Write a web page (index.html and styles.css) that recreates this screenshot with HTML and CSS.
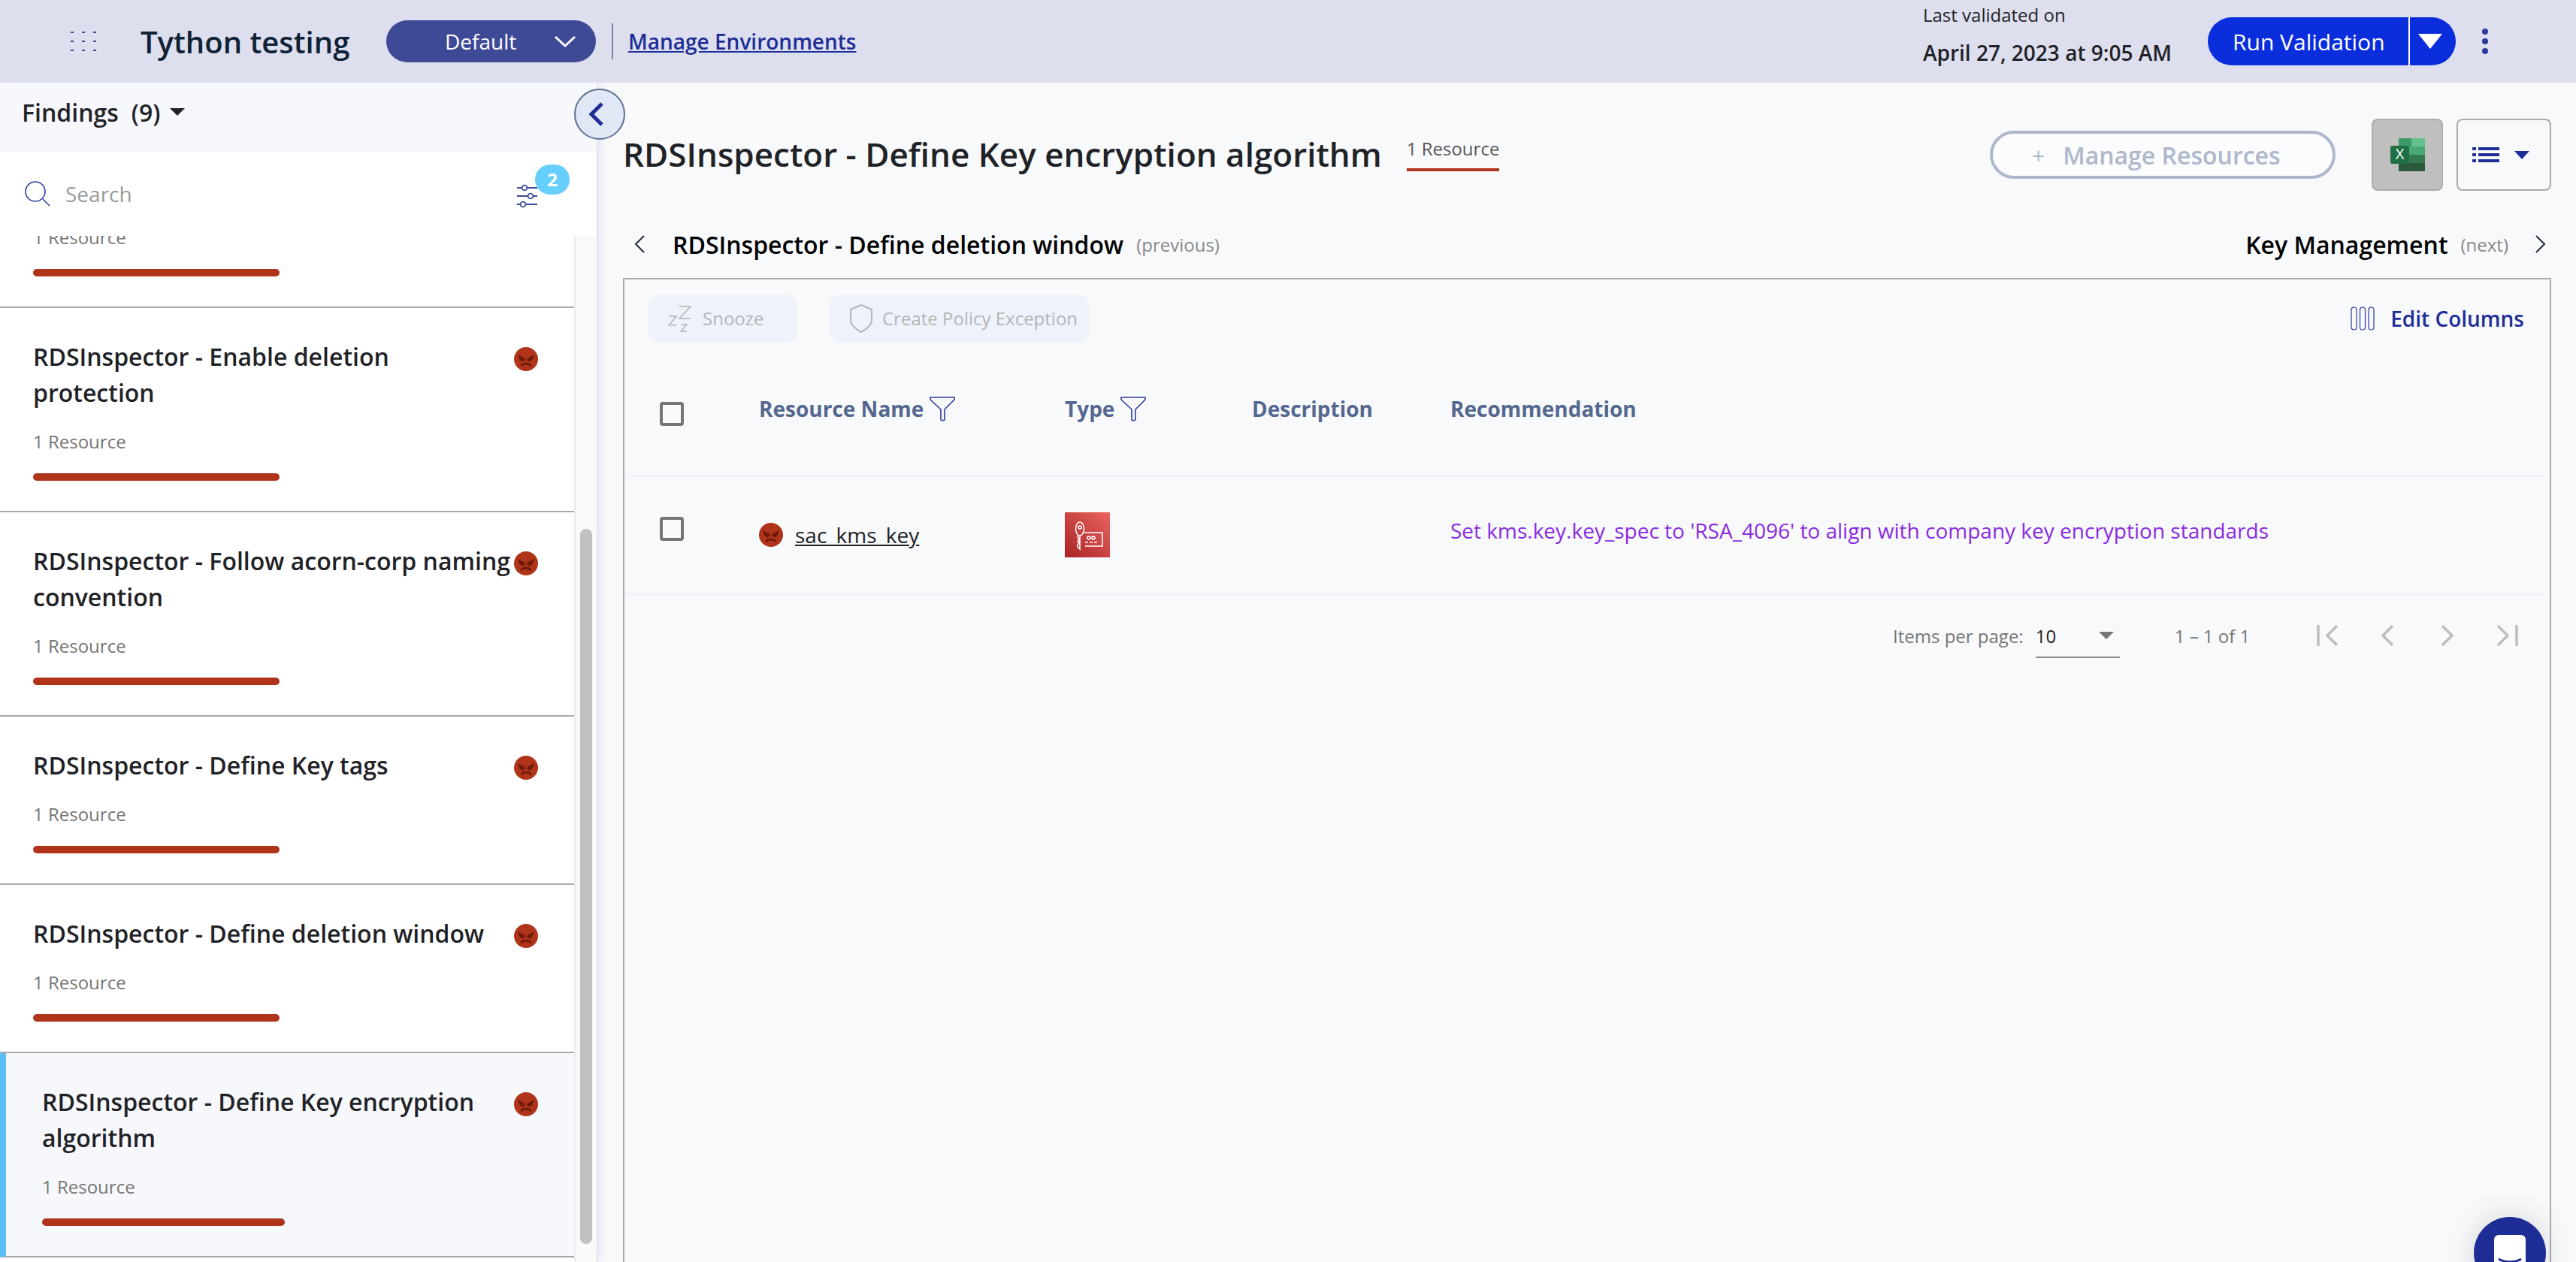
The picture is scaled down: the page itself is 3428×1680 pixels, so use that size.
FILE: index.html
```html
<!DOCTYPE html>
<html lang="en">
<head>
<meta charset="utf-8">
<title>Tython testing - Findings</title>
<link rel="stylesheet" href="styles.css">
</head>
<body>
<svg class="defs" width="0" height="0">
  <symbol id="angry" viewBox="0 0 32 32">
    <circle cx="16" cy="16" r="16" fill="#b03419"/>
    <path d="M5 10l9.500 5v3l-3.500 1.500-3.500-2.500zM27 10l-9.500 5v3l3.500 1.500 3.500-2.500z" fill="#6e1a0a"/>
    <path d="M9.500 25.500c2-4.500 11-4.500 13 0" fill="none" stroke="#6e1a0a" stroke-width="2.600"/>
  </symbol>
  <symbol id="funnel" viewBox="0 0 34 33">
    <path d="M1 1h32v3L20 17v14l-3 1-2-1V17L1 4z" fill="none" stroke="#2a3a9e" stroke-width="1.6"/>
  </symbol>
</svg>

<header class="topbar">
  <svg class="apps" width="34" height="26" viewBox="0 0 34 26" fill="#3f4a97">
    <rect x="0" y="0" width="4" height="2"/><rect x="15" y="0" width="4" height="2"/><rect x="30" y="0" width="4" height="2"/>
    <rect x="0" y="12" width="4" height="2"/><rect x="15" y="12" width="4" height="2"/><rect x="30" y="12" width="4" height="2"/>
    <rect x="0" y="24" width="4" height="2"/><rect x="15" y="24" width="4" height="2"/><rect x="30" y="24" width="4" height="2"/>
  </svg>
  <div class="app-name">Tython testing</div>
  <div class="env-select">
    <span>Default</span>
    <svg width="30" height="18" viewBox="0 0 30 18"><path d="M2 3l13 12L28 3" fill="none" stroke="#fff" stroke-width="3"/></svg>
  </div>
  <div class="env-divider"></div>
  <a class="env-link" href="#">Manage Environments</a>
  <div class="validated">
    <div class="validated-label">Last validated on</div>
    <div class="validated-date">April 27, 2023 at 9:05 AM</div>
  </div>
  <div class="run-btn">
    <span class="run-label">Run Validation</span>
    <span class="run-arrow"><svg width="32" height="20" viewBox="0 0 32 20"><path d="M0 0h32L16 20z" fill="#fff"/></svg></span>
  </div>
  <div class="kebab"><i></i><i></i><i></i></div>
</header>

<div class="layout">
  <aside class="sidebar">
    <div class="side-head">
      <span class="side-title">Findings</span>
      <span class="side-count">(9)</span>
      <span class="side-caret"></span>
    </div>
    <div class="side-search">
      <svg width="34" height="34" viewBox="0 0 34 34" fill="none" stroke="#2e3d9c" stroke-width="1.6"><circle cx="14" cy="14" r="13"/><path d="M24 24l9 9"/></svg>
      <span class="search-text">Search</span>
      <span class="filter">
        <svg width="28" height="32" viewBox="0 0 28 32" fill="#fff" stroke="#3f4a97" stroke-width="1.8"><path d="M0 5h27M0 16h27M0 27h27" /><circle cx="10" cy="5" r="3.4"/><circle cx="18" cy="16" r="3.4"/><circle cx="8" cy="27" r="3.4"/></svg>
        <span class="badge">2</span>
      </span>
    </div>
    <div class="side-body">
      <div class="findings">
        <div class="finding finding-cut">
          <div class="finding-res">1 Resource</div>
          <div class="finding-bar"></div>
        </div>
        <div class="finding">
          <div class="finding-top">
            <div class="finding-name">RDSInspector - Enable deletion protection</div>
            <svg class="finding-icon"><use href="#angry"/></svg>
          </div>
          <div class="finding-res">1 Resource</div>
          <div class="finding-bar"></div>
        </div>
        <div class="finding">
          <div class="finding-top">
            <div class="finding-name">RDSInspector - Follow acorn-corp naming convention</div>
            <svg class="finding-icon"><use href="#angry"/></svg>
          </div>
          <div class="finding-res">1 Resource</div>
          <div class="finding-bar"></div>
        </div>
        <div class="finding">
          <div class="finding-top">
            <div class="finding-name">RDSInspector - Define Key tags</div>
            <svg class="finding-icon"><use href="#angry"/></svg>
          </div>
          <div class="finding-res">1 Resource</div>
          <div class="finding-bar"></div>
        </div>
        <div class="finding">
          <div class="finding-top">
            <div class="finding-name">RDSInspector - Define deletion window</div>
            <svg class="finding-icon"><use href="#angry"/></svg>
          </div>
          <div class="finding-res">1 Resource</div>
          <div class="finding-bar"></div>
        </div>
        <div class="finding finding-active">
          <div class="finding-top">
            <div class="finding-name">RDSInspector - Define Key encryption algorithm</div>
            <svg class="finding-icon"><use href="#angry"/></svg>
          </div>
          <div class="finding-res">1 Resource</div>
          <div class="finding-bar"></div>
        </div>
      </div>
      <div class="scroll-track"><div class="scroll-thumb"></div></div>
    </div>
    <div class="collapse">
      <svg width="30" height="34" viewBox="0 0 30 34"><path d="M21 3L7 17l14 14" fill="none" stroke="#1e2d96" stroke-width="5"/></svg>
    </div>
  </aside>

  <main class="main">
    <div class="title-row">
      <h1 class="page-title">RDSInspector - Define Key encryption algorithm</h1>
      <div class="res-tab">1 Resource</div>
      <div class="manage-btn"><span class="manage-plus">+</span>Manage Resources</div>
      <div class="excel-btn">
        <svg width="46" height="44" viewBox="0 0 46 44">
          <rect x="11" y="0" width="35" height="44" rx="2" fill="#21734a"/>
          <rect x="28" y="0" width="18" height="11" fill="#66c08a"/>
          <rect x="11" y="0" width="17" height="11" fill="#3b9a66"/>
          <rect x="11" y="11" width="35" height="11" fill="#4aa876"/>
          <rect x="11" y="22" width="35" height="11" fill="#33794c"/>
          <rect x="11" y="33" width="35" height="11" fill="#2a5a3a"/>
          <rect x="0" y="10" width="25" height="24" rx="2" fill="#1f7145"/>
          <text x="12.5" y="28" class="excel-x">X</text>
        </svg>
      </div>
      <div class="view-btn">
        <svg width="36" height="20" viewBox="0 0 36 20" fill="#1e2d96"><rect x="0" y="0" width="5" height="4"/><rect x="8" y="0" width="28" height="4"/><rect x="0" y="8" width="5" height="4"/><rect x="8" y="8" width="28" height="4"/><rect x="0" y="16" width="5" height="4"/><rect x="8" y="16" width="28" height="4"/></svg>
        <span class="view-caret"></span>
      </div>
    </div>

    <div class="nav-row">
      <svg class="nav-chev" width="14" height="24" viewBox="0 0 14 24"><path d="M13 1L2 12l11 11" fill="none" stroke="#1f2a3a" stroke-width="2"/></svg>
      <span class="nav-name">RDSInspector - Define deletion window</span>
      <span class="nav-hint">(previous)</span>
      <span class="nav-name nav-next">Key Management</span>
      <span class="nav-hint">(next)</span>
      <svg class="nav-chev nav-chev-r" width="14" height="24" viewBox="0 0 14 24"><path d="M1 1l11 11L1 23" fill="none" stroke="#1f2a3a" stroke-width="2"/></svg>
    </div>

    <section class="panel">
      <div class="toolbar">
        <div class="tool-btn tool-snooze">
          <svg width="34" height="36" viewBox="0 0 34 36" fill="none" stroke="#b5b5b5" stroke-width="1.6"><path d="M1 15h10L1 27h10M15 2h15L15 18h15M17 26h8l-8 9h8"/></svg>
          <span>Snooze</span>
        </div>
        <div class="tool-btn tool-policy">
          <svg width="32" height="38" viewBox="0 0 32 38" fill="none" stroke="#b5b5b5" stroke-width="2"><path d="M16 1l14 6v14c0 7-8 13-14 16C10 34 2 28 2 21V7z"/></svg>
          <span>Create Policy Exception</span>
        </div>
        <div class="edit-cols">
          <svg width="32" height="32" viewBox="0 0 32 32" fill="none" stroke="#2a3a9e" stroke-width="1.2"><rect x="1" y="1" width="7" height="30" rx="3.5"/><rect x="12.5" y="1" width="7" height="30" rx="3.5"/><rect x="24" y="1" width="7" height="30" rx="3.5"/></svg>
          <span>Edit Columns</span>
        </div>
      </div>

      <div class="grid-row grid-head">
        <div><span class="check check-head"></span></div>
        <div class="col-title">Resource Name <svg class="funnel"><use href="#funnel"/></svg></div>
        <div class="col-title">Type <svg class="funnel"><use href="#funnel"/></svg></div>
        <div class="col-title">Description</div>
        <div class="col-title">Recommendation</div>
      </div>

      <div class="grid-row grid-data">
        <div><span class="check check-data"></span></div>
        <div class="res-cell">
          <svg class="res-icon"><use href="#angry"/></svg>
          <a class="res-link" href="#">sac_kms_key</a>
        </div>
        <div>
          <svg class="type-icon" width="60" height="60" viewBox="0 0 60 60">
            <defs>
              <linearGradient id="kmsbg" x1="0" y1="1" x2="1" y2="0">
                <stop offset="0" stop-color="#a92325"/>
                <stop offset="1" stop-color="#ea6460"/>
              </linearGradient>
            </defs>
            <rect width="60" height="60" fill="url(#kmsbg)"/>
            <g fill="none" stroke="#fff" stroke-width="1.6">
              <ellipse cx="20" cy="22" rx="5.5" ry="9"/>
              <circle cx="20" cy="20" r="2"/>
              <path d="M20 31v18l-3 -3v-3l2-2-2-2 2-3-2-3v-2"/>
              <path d="M26 27h24v18H27"/>
              <circle cx="32" cy="34" r="2"/>
              <circle cx="38" cy="34" r="2"/>
              <path d="M27 40h4M33 40h4M39 40h4"/>
            </g>
          </svg>
        </div>
        <div></div>
        <div class="rec-cell">Set kms.key.key_spec to 'RSA_4096' to align with company key encryption standards</div>
      </div>

      <div class="pager">
        <span class="pager-label">Items per page:</span>
        <div class="pager-select"><span>10</span><i></i></div>
        <span class="pager-range">1 – 1 of 1</span>
        <div class="pager-btns">
          <svg width="29" height="28" viewBox="0 0 29 28" fill="none" stroke="#bdbdbd" stroke-width="3.4"><path d="M2 0v28M27 1L14 14l13 13"/></svg>
          <svg width="18" height="28" viewBox="0 0 18 28" fill="none" stroke="#bdbdbd" stroke-width="3.4"><path d="M16 1L3 14l13 13"/></svg>
          <svg class="pager-next" width="18" height="28" viewBox="0 0 18 28" fill="none" stroke="#bdbdbd" stroke-width="3.4"><path d="M2 1l13 13L2 27"/></svg>
          <svg width="29" height="28" viewBox="0 0 29 28" fill="none" stroke="#bdbdbd" stroke-width="3.4"><path d="M27 0v28M2 1l13 13L2 27"/></svg>
        </div>
      </div>
    </section>
  </main>
</div>

<div class="chat">
  <svg width="42" height="60" viewBox="0 0 42 60"><rect width="42" height="44" rx="6" fill="#fff"/><path d="M6 32c8 5 22 5 30 0" fill="none" stroke="#1e2d96" stroke-width="3"/></svg>
</div>
</body>
</html>
```

FILE: styles.css
```css
html, body {
  height: 100%;
  margin: 0;
  padding: 0;
  overflow: hidden;
}

body {
  background-color: #f8f9fb;
  color: #1f2226;
  font-family: "Open Sans", "Noto Sans", sans-serif;
  position: relative;
}

.defs {
  position: absolute;
}

/* top bar */
.topbar {
  height: 110px;
  background-color: #dddfee;
  display: flex;
  align-items: center;
  padding-left: 94px;
  padding-right: 117px;
  box-sizing: border-box;
}

.app-name {
  margin-left: 59px;
  font-size: 40px;
  font-weight: 600;
  color: #0f2236;
  width: 327px;
  white-space: nowrap;
}

.env-select {
  width: 279px;
  height: 56px;
  border-radius: 28px;
  background-color: #3f4a97;
  color: #fff;
  font-size: 28px;
  display: flex;
  align-items: center;
  box-sizing: border-box;
  padding-left: 78px;
}

.env-select svg {
  margin-left: 50px;
}

.env-divider {
  width: 2px;
  height: 48px;
  background-color: #7b83ad;
  margin-left: 21px;
}

.env-link {
  margin-left: 20px;
  font-size: 28px;
  font-weight: 600;
  color: #1e2d96;
}

.validated {
  margin-left: auto;
  width: 379px;
  height: 110px;
  position: relative;
  display: flex;
  flex-direction: column;
}

.validated-label {
  font-size: 24px;
  line-height: 40px;
  color: #1f2226;
}

.validated-date {
  font-size: 28px;
  font-weight: 600;
  line-height: 40px;
  margin-top: 10px;
  color: #1f2226;
  white-space: nowrap;
}

.run-btn {
  width: 330px;
  height: 64px;
  border-radius: 32px;
  background-color: #0b2edc;
  color: #fff;
  display: flex;
  align-items: center;
  box-sizing: border-box;
}

.run-label {
  width: 267px;
  padding-left: 33px;
  box-sizing: border-box;
  font-size: 30px;
  font-weight: 500;
  white-space: nowrap;
}

.run-arrow {
  border-left: 2px solid #fff;
  height: 64px;
  padding-left: 11px;
  display: flex;
  align-items: center;
}

.kebab {
  margin-left: 35px;
  display: flex;
  flex-direction: column;
  gap: 5px;
}

.kebab i {
  display: block;
  width: 8px;
  height: 8px;
  border-radius: 50%;
  background-color: #2a3a9e;
}

.layout {
  display: flex;
  height: 1570px;
}

/* left column */
.sidebar {
  width: 796px;
  flex: none;
  box-sizing: border-box;
  border-right: 2px solid #e2e3e8;
  box-shadow: 8px 0 8px -4px rgba(225, 229, 242, 0.8);
  position: relative;
  display: flex;
  flex-direction: column;
}

.side-head {
  height: 92px;
  background-color: #f7f8fb;
  display: flex;
  align-items: center;
  padding-left: 29px;
  font-size: 32px;
  font-weight: 600;
  flex: none;
  padding-bottom: 14px;
  box-sizing: border-box;
}

.side-count {
  margin-left: 17px;
}

.side-caret {
  margin-left: 13px;
  border-left: 10px solid transparent;
  border-right: 10px solid transparent;
  border-top: 10px solid #1f2226;
}

.side-search {
  height: 112px;
  background-color: #fff;
  display: flex;
  align-items: center;
  padding-left: 33px;
  flex: none;
}

.search-text {
  margin-left: 20px;
  font-size: 28px;
  color: #9b9b9b;
}

.filter {
  margin-left: auto;
  margin-right: 78px;
  position: relative;
  display: flex;
  margin-top: 6px;
}

.badge {
  position: absolute;
  left: 24px;
  top: -26px;
  width: 46px;
  height: 40px;
  border-radius: 20px;
  background-color: #66cffd;
  color: #fff;
  font-size: 24px;
  font-weight: 700;
  text-align: center;
  line-height: 40px;
}

.side-body {
  flex: 1;
  display: flex;
  min-height: 0;
}

.findings {
  width: 764px;
  flex: none;
  background-color: #fff;
}

.finding {
  box-sizing: border-box;
  border-bottom: 2px solid #aaaaaa;
  padding: 41px 48px 40px 44px;
}

.finding-cut {
  height: 96px;
  padding-top: 0;
  display: flex;
  flex-direction: column;
  justify-content: flex-end;
  overflow: hidden;
}

.finding-active {
  background-color: #f7f8fb;
  border-left: 8px solid #5bbcf8;
  padding-left: 48px;
}

.finding-top {
  display: flex;
  justify-content: space-between;
}

.finding-name {
  font-size: 32px;
  font-weight: 600;
  line-height: 48px;
  width: 640px;
  color: #1f2226;
}

.finding-active .finding-name {
  width: 620px;
}

.finding-icon {
  width: 32px;
  height: 32px;
  margin-top: 11px;
  flex: none;
}

.finding-res {
  font-size: 24px;
  line-height: 34px;
  margin-top: 24px;
  color: #757575;
  flex: none;
}

.finding-bar {
  width: 328px;
  height: 10px;
  border-radius: 5px;
  background-color: #b03419;
  margin-top: 25px;
  flex: none;
}

.finding-active .finding-bar {
  width: 323px;
}

.scroll-track {
  flex: 1;
  background-color: #f9f9f9;
  border-left: 2px solid #ececec;
  padding: 390px 6px 0 6px;
  box-sizing: border-box;
  height: 1366px;
}

.scroll-thumb {
  height: 952px;
  border-radius: 8px;
  background-color: #c1c1c1;
}

.collapse {
  position: absolute;
  left: 764px;
  top: 8px;
  width: 68px;
  height: 68px;
  box-sizing: border-box;
  border-radius: 50%;
  border: 2px solid #5e7094;
  background-color: #e1e8f5;
  display: flex;
  align-items: center;
  justify-content: center;
  padding-right: 6px;
  z-index: 2;
}

/* right column */
.main {
  flex: 1;
  min-width: 0;
  padding: 48px 33px 0 33px;
  box-sizing: border-box;
  display: flex;
  flex-direction: column;
}

.title-row {
  display: flex;
  align-items: center;
  height: 96px;
  flex: none;
}

.page-title {
  margin: 0 0 2px;
  font-size: 44px;
  font-weight: 600;
  white-space: nowrap;
  color: #1f2226;
}

.res-tab {
  margin-left: 33px;
  margin-top: -6px;
  font-size: 24px;
  color: #555;
  padding: 2px 0 10px;
  border-bottom: 4px solid #b03419;
  width: 123px;
  white-space: nowrap;
}

.manage-btn {
  margin-left: auto;
  width: 460px;
  height: 64px;
  box-sizing: border-box;
  border: 4px solid #aeb7cb;
  border-radius: 32px;
  background-color: #fbfcfe;
  color: #aeb7cb;
  font-size: 32px;
  font-weight: 600;
  display: flex;
  align-items: center;
  padding-left: 52px;
}

.manage-plus {
  font-weight: 400;
  margin-right: 24px;
  font-size: 30px;
}

.excel-btn {
  margin-left: 48px;
  width: 95px;
  height: 96px;
  box-sizing: border-box;
  border: 2px solid #acacac;
  border-radius: 8px;
  background-color: #bfbfbf;
  display: flex;
  align-items: center;
  justify-content: center;
}

.excel-x {
  font-family: "Open Sans", sans-serif;
  font-size: 20px;
  fill: #fff;
  text-anchor: middle;
}

.view-btn {
  margin-left: 18px;
  width: 126px;
  height: 96px;
  box-sizing: border-box;
  border: 2px solid #aaaaaa;
  border-radius: 8px;
  display: flex;
  align-items: center;
  padding-left: 19px;
}

.view-caret {
  margin-left: 20px;
  border-left: 10px solid transparent;
  border-right: 10px solid transparent;
  border-top: 11px solid #1e2d96;
}

.nav-row {
  display: flex;
  align-items: center;
  height: 54px;
  margin-top: 44px;
  flex: none;
}

.nav-chev {
  margin-left: 15px;
  margin-right: 37px;
}

.nav-chev-r {
  margin-left: 36px;
  margin-right: 7px;
}

.nav-name {
  font-size: 32px;
  font-weight: 600;
  color: #000;
  white-space: nowrap;
}

.nav-next {
  margin-left: auto;
}

.nav-hint {
  margin-left: 17px;
  font-size: 24px;
  color: #888;
}

.panel {
  margin-top: 18px;
  flex: 1;
  border: 2px solid #aaaaaa;
  border-bottom: none;
  box-sizing: border-box;
}

.toolbar {
  display: flex;
  align-items: center;
  padding: 20px 34px 0 31px;
}

.tool-btn {
  height: 64px;
  border-radius: 16px;
  background-color: #eef2fa;
  color: #b5b5b5;
  font-size: 24px;
  display: flex;
  align-items: center;
  box-sizing: border-box;
}

.tool-btn span {
  margin-bottom: 2px;
}

.tool-snooze {
  width: 199px;
  padding-left: 27px;
  gap: 12px;
}

.tool-policy {
  width: 347px;
  padding-left: 27px;
  margin-left: 42px;
  gap: 12px;
}

.edit-cols {
  margin-left: auto;
  display: flex;
  align-items: center;
  gap: 21px;
  font-size: 28px;
  font-weight: 600;
  color: #1e2d96;
}

.grid-row {
  display: grid;
  grid-template-columns: 132px 407px 249px 264px 1fr;
  padding-left: 47px;
  align-items: center;
  border-bottom: 2px solid #eff2f9;
}

.grid-head {
  height: 176px;
}

.grid-data {
  height: 156px;
}

.col-title {
  font-size: 28px;
  font-weight: 700;
  color: #54688f;
  display: flex;
  align-items: center;
  gap: 8px;
  white-space: nowrap;
}

.funnel {
  width: 34px;
  height: 33px;
  flex: none;
}

.check {
  display: block;
  width: 32px;
  height: 32px;
  box-sizing: border-box;
  border: 4px solid #757575;
  border-radius: 4px;
}

.check-head {
  margin-top: 14px;
}

.check-data {
  margin-bottom: 16px;
}

.res-cell {
  display: flex;
  align-items: center;
  gap: 16px;
}

.res-icon {
  width: 32px;
  height: 32px;
  flex: none;
}

.res-link {
  font-size: 28px;
  color: #222;
  text-decoration: underline;
}

.type-icon {
  display: block;
}

.rec-cell {
  font-size: 28px;
  color: #8a2be2;
  margin-bottom: 12px;
  white-space: nowrap;
}

.pager {
  display: flex;
  align-items: center;
  height: 108px;
  padding-left: 1688px;
  color: #757575;
  font-size: 24px;
}

.pager-select {
  margin-left: 16px;
  width: 112px;
  height: 50px;
  margin-top: 10px;
  border-bottom: 2px solid #8a8a8a;
  display: flex;
  align-items: center;
  color: #1f2226;
  box-sizing: border-box;
  padding-bottom: 8px;
}

.pager-select i {
  margin-left: auto;
  margin-right: 8px;
  border-left: 10px solid transparent;
  border-right: 10px solid transparent;
  border-top: 10px solid #757575;
}

.pager-range {
  margin-left: 73px;
}

.pager-btns {
  margin-left: 89px;
  display: flex;
  align-items: center;
  gap: 56px;
}

.pager-next {
  margin-left: 6px;
}

.chat {
  position: absolute;
  left: 3292px;
  top: 1620px;
  width: 96px;
  height: 96px;
  border-radius: 50%;
  background-color: #1e2d96;
  box-shadow: 0 0 40px rgba(0, 0, 0, 0.15);
  display: flex;
  justify-content: center;
  padding-top: 24px;
  box-sizing: border-box;
}
```
